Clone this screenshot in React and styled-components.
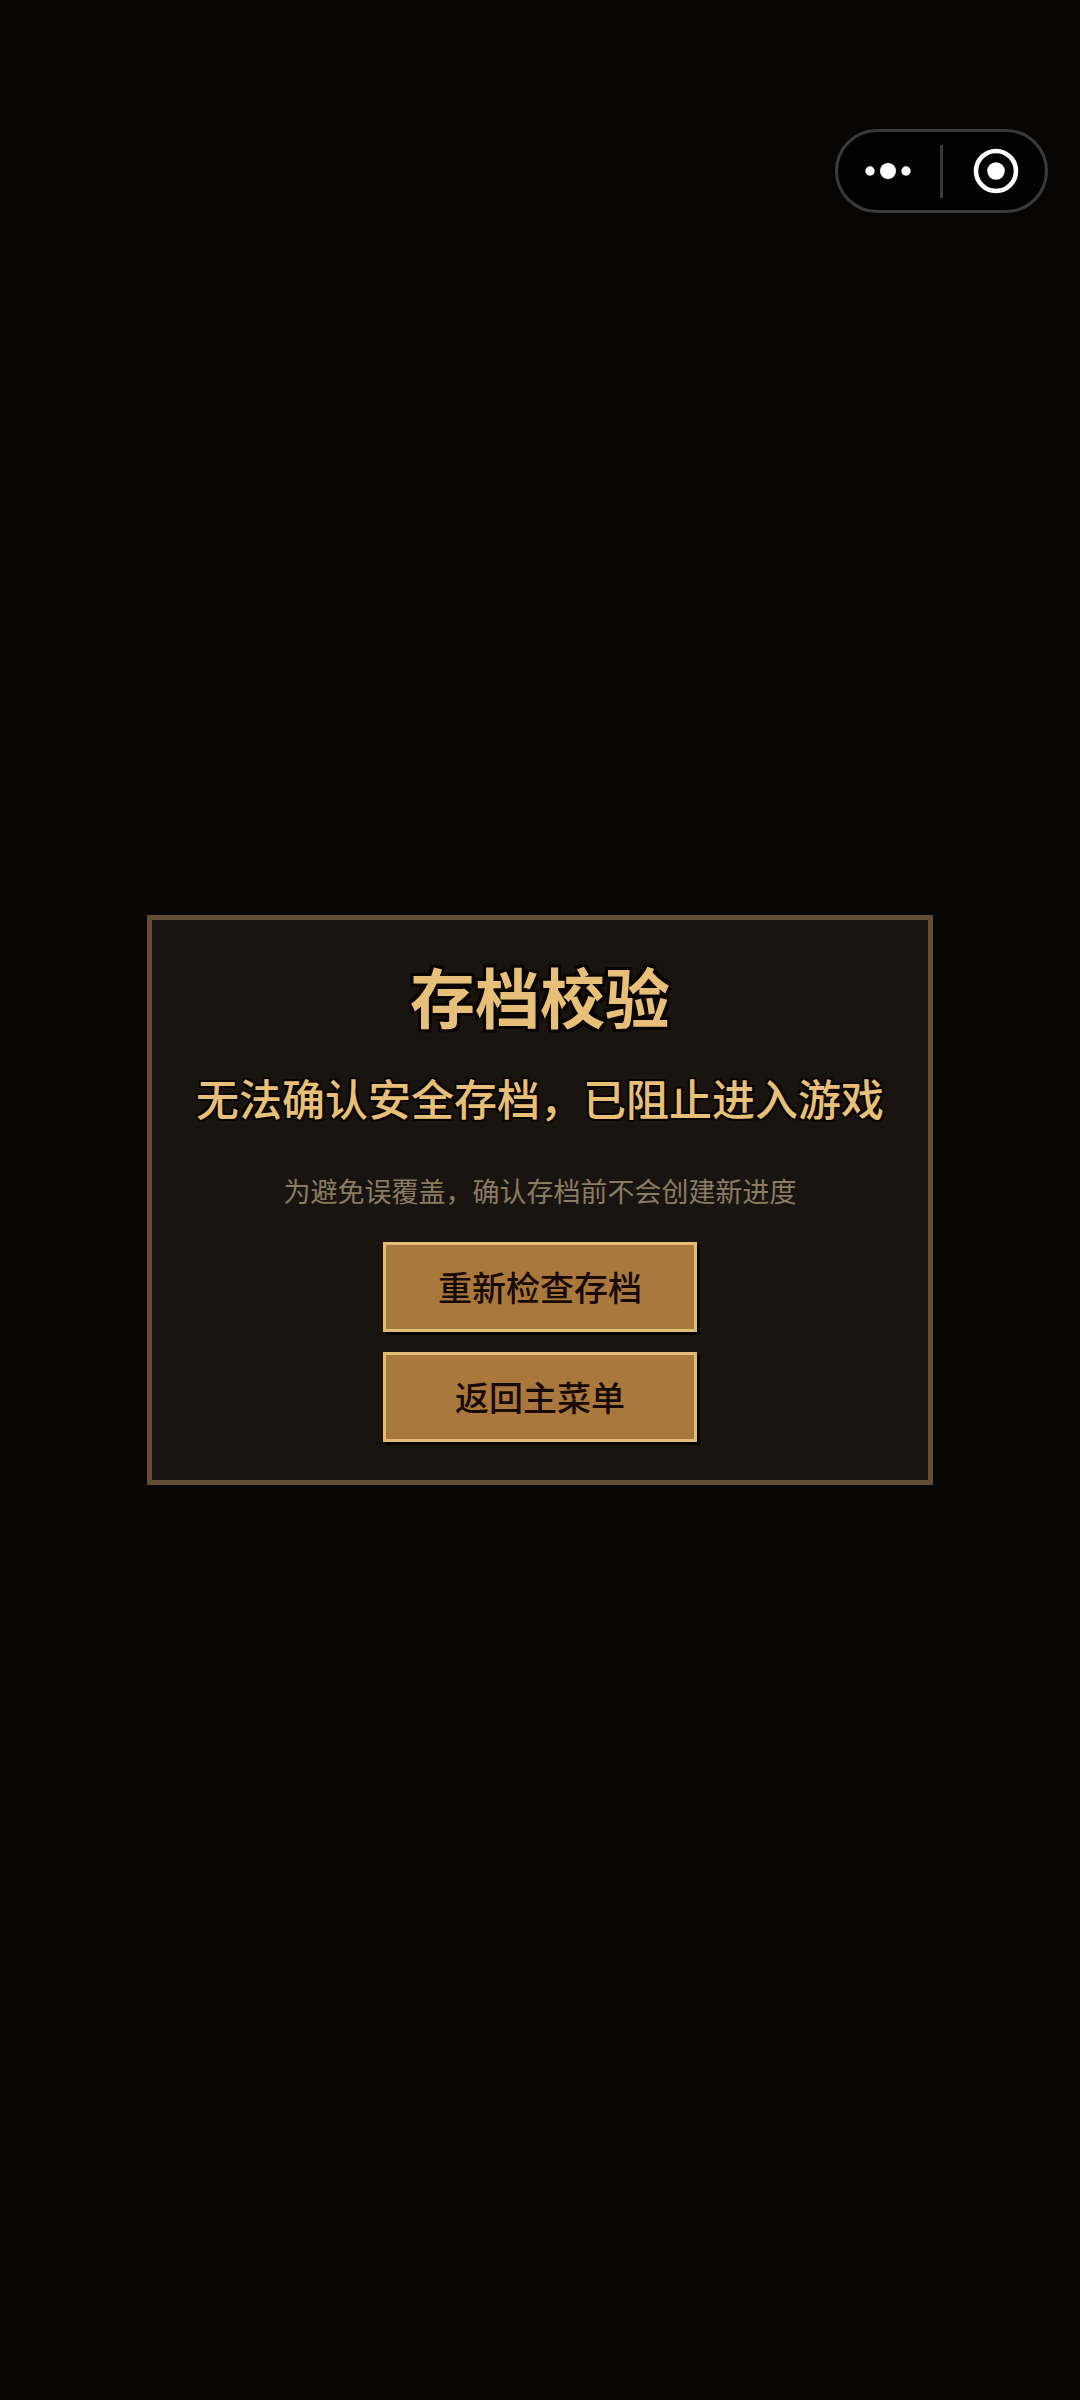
import React from "react";
import styled, { createGlobalStyle } from "styled-components";

const GlobalStyle = createGlobalStyle`
  *,
  *::before,
  *::after {
    box-sizing: border-box;
  }

  body {
    margin: 0;
    background: #070604;
    font-family: "Noto Sans CJK SC", sans-serif;
  }
`;

const Screen = styled.div`
  display: grid;
  grid-template-rows: 1fr auto 1fr;
  min-height: 100vh;
`;

const TopBar = styled.header`
  display: flex;
  justify-content: flex-end;
  align-items: flex-start;
  padding: 129px 32px 0;
`;

const Capsule = styled.div`
  display: flex;
  align-items: center;
  height: 84px;
  border: 3px solid #3a3a3a;
  border-radius: 42px;
  background: #020202;
`;

const CapsuleButton = styled.button`
  display: flex;
  align-items: center;
  justify-content: center;
  width: 102px;
  height: 78px;
  padding: 0;
  border: none;
  background: none;
  color: #ffffff;
  cursor: pointer;

  &:first-child {
    padding-right: 3px;
  }

  &:last-child {
    padding-left: 3px;
  }
`;

const CapsuleDivider = styled.span`
  width: 3px;
  height: 53px;
  background: #3a3a3a;
`;

const Panel = styled.main`
  display: flex;
  flex-direction: column;
  align-items: center;
  justify-self: center;
  padding: 39px 44px 38px;
  border: 5px solid #644d35;
  background: #19140f;
  text-align: center;
`;

const Title = styled.h1`
  margin: 0 0 40px;
  font-size: 65px;
  line-height: 72px;
  font-weight: 700;
  color: #e6c078;
  text-shadow: 3px 3px 0 #0b0503, -3px 3px 0 #0b0503, 3px -3px 0 #0b0503,
    -3px -3px 0 #0b0503;
`;

const Message = styled.p`
  margin: 0 0 50px;
  font-size: 43px;
  line-height: 52px;
  font-weight: 500;
  color: #e6c078;
  text-shadow: 2px 2px 0 #0b0503, -2px 2px 0 #0b0503, 2px -2px 0 #0b0503,
    -2px -2px 0 #0b0503;
`;

const Hint = styled.p`
  margin: 0 0 33px;
  font-size: 27px;
  line-height: 36px;
  color: #8a7c63;
`;

const Actions = styled.div`
  display: flex;
  flex-direction: column;
  gap: 20px;
`;

const ActionButton = styled.button`
  width: 314px;
  height: 90px;
  padding: 0;
  border: 3px solid #e0bc74;
  background: #a9783c;
  box-shadow: 3px 3px 0 #080402;
  font-family: inherit;
  font-size: 34px;
  line-height: 40px;
  font-weight: 500;
  color: #180a04;
  cursor: pointer;

  &:hover {
    background: #b98646;
  }
`;

const actions = ["重新检查存档", "返回主菜单"];

const MoreIcon = () => (
  <svg width="46" height="16" viewBox="0 0 46 16" fill="currentColor">
    <circle cx="5" cy="8" r="4.7" />
    <circle cx="23" cy="8" r="8" />
    <circle cx="41" cy="8" r="4.7" />
  </svg>
);

const CloseIcon = () => (
  <svg width="46" height="46" viewBox="0 0 46 46">
    <circle
      cx="23"
      cy="23"
      r="20"
      fill="none"
      stroke="currentColor"
      strokeWidth="4.6"
    />
    <circle cx="23" cy="23" r="8.8" fill="currentColor" />
  </svg>
);

const App = () => {
  return (
    <>
      <GlobalStyle />
      <Screen>
        <TopBar>
          <Capsule>
            <CapsuleButton aria-label="更多">
              <MoreIcon />
            </CapsuleButton>
            <CapsuleDivider />
            <CapsuleButton aria-label="关闭">
              <CloseIcon />
            </CapsuleButton>
          </Capsule>
        </TopBar>
        <Panel>
          <Title>存档校验</Title>
          <Message>无法确认安全存档，已阻止进入游戏</Message>
          <Hint>为避免误覆盖，确认存档前不会创建新进度</Hint>
          <Actions>
            {actions.map((label) => (
              <ActionButton key={label}>{label}</ActionButton>
            ))}
          </Actions>
        </Panel>
      </Screen>
    </>
  );
};

export default App;
